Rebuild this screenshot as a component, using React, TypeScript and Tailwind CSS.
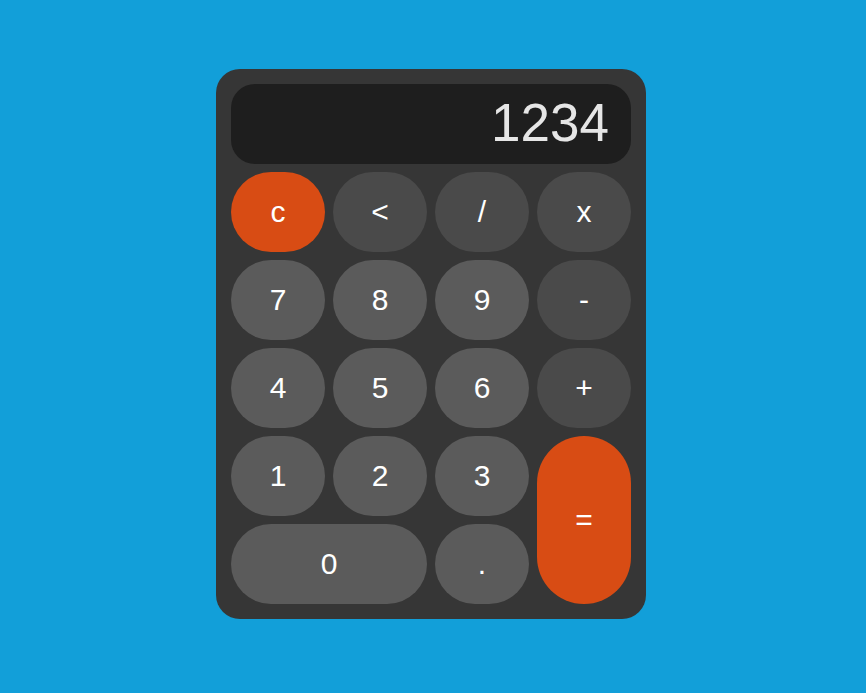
import React from "react";

type Key = {
  label: string;
  kind: "num" | "op" | "accent";
  className?: string;
};

const keys: Key[] = [
  { label: "c", kind: "accent" },
  { label: "<", kind: "op" },
  { label: "/", kind: "op" },
  { label: "x", kind: "op" },
  { label: "7", kind: "num" },
  { label: "8", kind: "num" },
  { label: "9", kind: "num" },
  { label: "-", kind: "op" },
  { label: "4", kind: "num" },
  { label: "5", kind: "num" },
  { label: "6", kind: "num" },
  { label: "+", kind: "op" },
  { label: "1", kind: "num" },
  { label: "2", kind: "num" },
  { label: "3", kind: "num" },
  { label: "=", kind: "accent", className: "row-span-2" },
  { label: "0", kind: "num", className: "col-span-2" },
  { label: ".", kind: "num" },
];

const kindClass = {
  num: "bg-[#5b5b5b]",
  op: "bg-[#4a4a4a]",
  accent: "bg-[#d84c14]",
};

const App = () => {
  return (
    <div
      className="min-h-screen w-full bg-[#129fd9] flex justify-center pt-[69px] pr-1"
      style={{ fontFamily: '"Liberation Sans", Arial, sans-serif' }}
    >
      <div className="w-[430px] h-[550px] bg-[#363636] rounded-[24px] p-[15px] flex flex-col gap-2">
        {/* Display */}
        <div className="h-20 bg-[#1e1e1e] rounded-[24px] flex items-center justify-end px-[22px] pb-1">
          <span className="text-[53px] leading-none text-[#e6e6e6]">1234</span>
        </div>

        {/* Keys */}
        <div className="grid grid-cols-4 auto-rows-[80px] gap-2">
          {keys.map((k) => (
            <button
              key={k.label}
              className={`${kindClass[k.kind]} ${k.className ?? ""} rounded-[50px] text-white text-[30px] leading-none flex items-center justify-center`}
            >
              {k.label}
            </button>
          ))}
        </div>
      </div>
    </div>
  );
};

export default App;
